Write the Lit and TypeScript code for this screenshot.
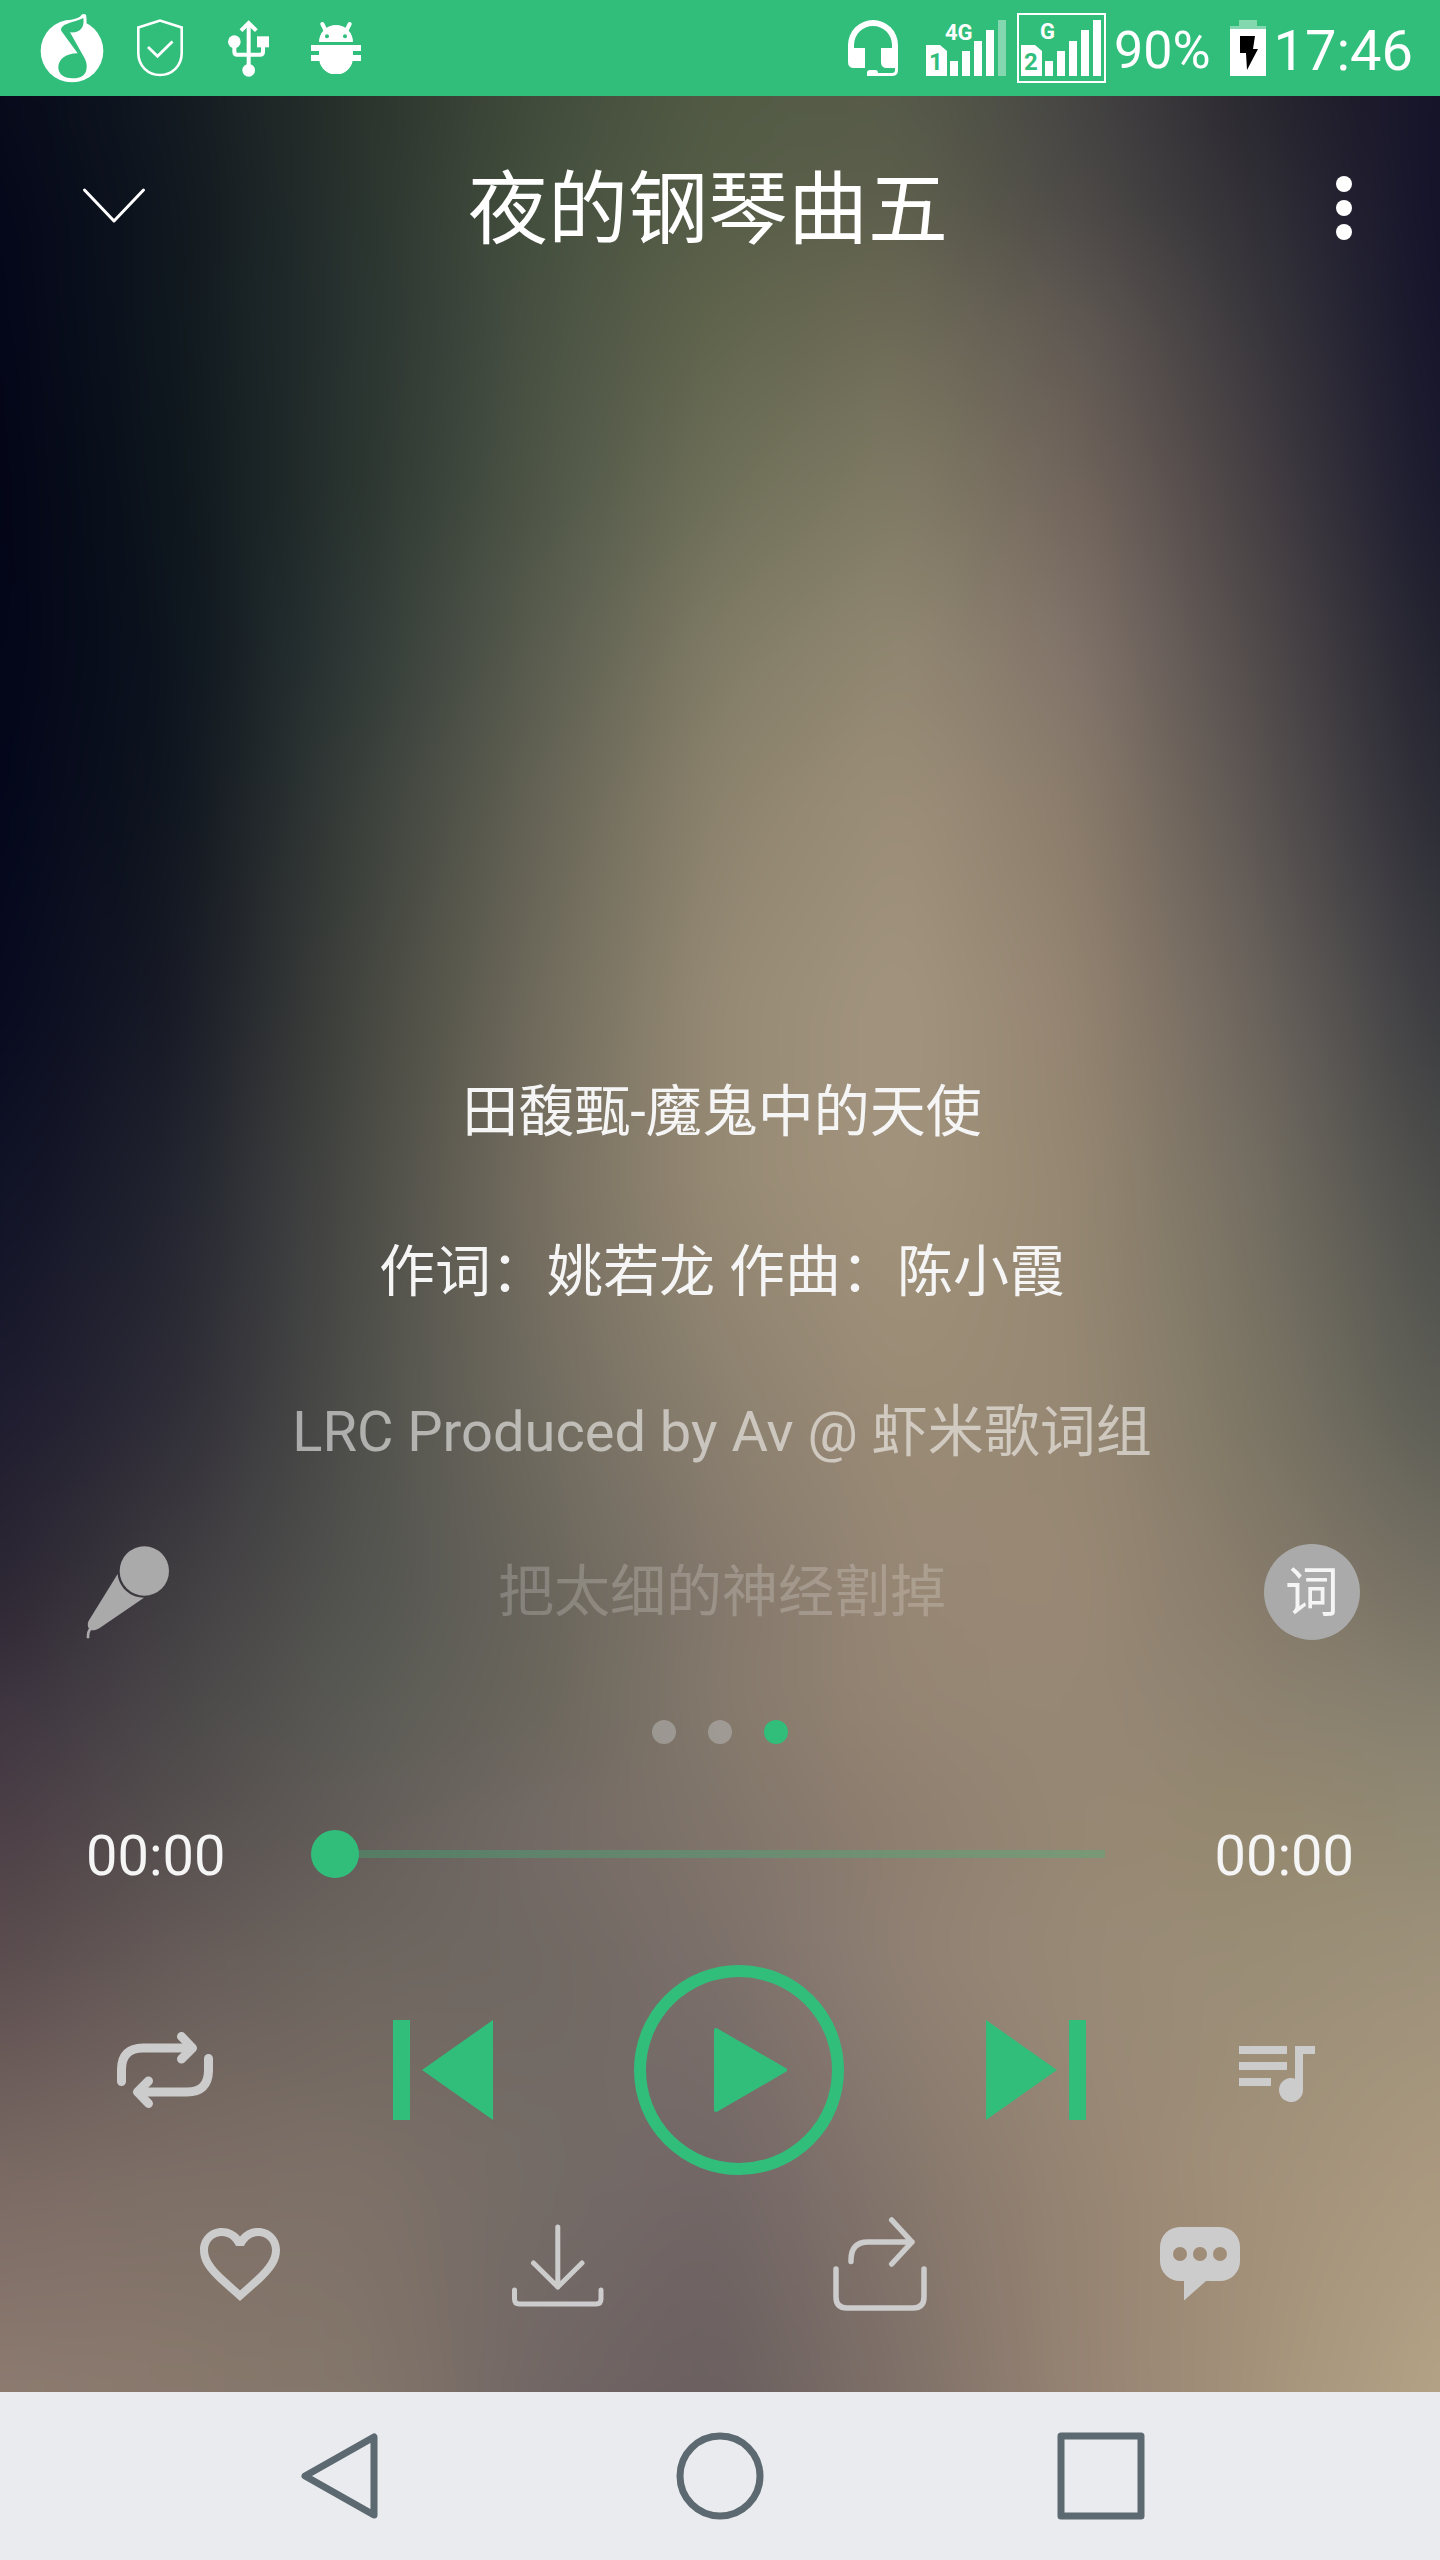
import { LitElement, html, css, svg } from "lit";
import { customElement, property, state } from "lit/decorators.js";

/* Colour field behind the player: each band has a height (percent) and nine evenly spaced colours. */
const BANDS: Array<[number, string]> = [
  [0, "070a1a 131b22 2b332c 424c3c 525b44 575b49 454443 28262e 151329"],
  [5, "04071a 11181f 2a342f 46513f 575e48 5f604d 4e4a48 312f36 14122a"],
  [9, "04061a 10191f 2a3431 485142 60644c 6c6956 5e5752 37353b 14132a"],
  [17, "030517 0e171d 2b3530 4e5647 6f7059 807b65 72655c 453f43 18182d"],
  [24, "030519 0d151e 303a37 5a5d4f 817c66 928872 81736a 504a4a 20202e"],
  [31, "04071c 10161f 3a403b 666456 8e846e 9d8f79 8b7c6b 5a5452 2a2a35"],
  [40, "080b20 181b26 44463f 716c5d 978b75 a39580 948370 6b645d 3a3b40"],
  [48, "101226 232530 4b4c46 776f61 978a74 a2937c 958771 746e62 4b4c4a"],
  [57, "1d1b2f 2f2d37 4f504b 716c60 8c8170 9b8c76 968873 7b7564 5b5c55"],
  [65, "2c2633 423f42 535450 69655c 84786c 978775 998874 877b6b 757063"],
  [70, "3d3440 4b4849 5a5b55 6a665c 857a6d 968573 978876 8d8270 868070"],
  [76, "4e4047 575150 655e5a 756b67 80746a 8e7e70 978874 96896f 938b75"],
  [81, "5a4c4e 675c59 6d665f 706862 7c706b 908174 998a77 9a8e77 9e917b"],
  [91, "7c6b65 7e7067 7e7168 746c67 726666 85766c 978573 a3917a ab9a80"],
  [100, "8d7b70 89796d 83766a 716664 6a5f5f 7e7068 968373 a4927a b5a387"],
];

/* The field is drawn past its visible edges by this much, so that the blur has colour to draw on. */
const BLEED = 96;
const along = (share: number) => `calc(${BLEED}px + (100% - ${2 * BLEED}px) * ${share})`;

@customElement("blurred-backdrop")
class BlurredBackdrop extends LitElement {
  static styles = css`
    :host {
      display: grid;
      overflow: hidden;
    }
    .field {
      display: grid;
      margin: -96px;
      filter: blur(32px);
    }
    .band {
      grid-area: 1 / 1;
    }
  `;

  render() {
    return html`<div class="field">
      ${BANDS.map(([at, colours], i) => {
        const stops = colours
          .split(" ")
          .map((c, n) => `#${c} ${along(n / 8)}`)
          .join(",");
        const mask = i
          ? `mask-image:linear-gradient(transparent ${along(BANDS[i - 1][0] / 100)},#000 ${along(at / 100)})`
          : "";
        return html`<div class="band" style="background-image:linear-gradient(90deg,${stops});${mask}"></div>`;
      })}
    </div>`;
  }
}

const bars = (x: number, last: number) => svg`
  <path d="M${x} 45h14l7 6v25h-21z" />
  <rect x=${x + 24} y="61" width="8" height="15" />
  <rect x=${x + 36} y="51" width="8" height="25" />
  <rect x=${x + 48} y="41" width="8" height="35" />
  <rect x=${x + 60} y="30" width="8" height="46" />
  <rect x=${x + 72} y="20" width="8" height="56" opacity=${last} />`;

@customElement("status-bar")
class StatusBar extends LitElement {
  static styles = css`
    :host {
      display: flex;
      justify-content: space-between;
      align-items: center;
      height: 96px;
      padding: 0 27px 0 28px;
      background: #31be7b;
      color: #fff;
      font-family: Roboto, sans-serif;
    }
    .notices,
    .system {
      display: flex;
      align-items: center;
    }
    .notices span {
      display: flex;
      justify-content: center;
      width: 88px;
    }
    .system {
      gap: 8px;
    }
    svg {
      display: block;
      fill: #fff;
    }
    .line {
      fill: none;
      stroke: #fff;
    }
    .cut {
      fill: #31be7b;
    }
    .tag {
      font: 700 22px Roboto, sans-serif;
    }
    .slot {
      font: 700 24px Roboto, sans-serif;
    }
    .charge,
    .time {
      padding-top: 5px;
      line-height: 64px;
    }
    .charge {
      font-size: 52px;
    }
    .time {
      font-size: 56px;
    }
  `;

  render() {
    return html`
      <div class="notices">
        <span>
          <svg width="64" height="72" viewBox="119 36 192 216" aria-hidden="true">
            <circle cx="215" cy="153" r="94" />
            <path d="M190 70C212 56 236 58 243 45Q249 39 257 44C260 58 259 72 256 88Z" />
            <path class="cut" d="M182 86C190 68 222 68 249 54C253 82 240 99 209 97L249 168C259 184 263 202 255 218C248 231 232 235 215 235C190 235 174 222 174 202C174 180 194 160 232 160L188 100Q181 92 182 86Z" />
          </svg>
        </span>
        <span>
          <svg width="46" height="58" viewBox="0 0 46 58" aria-hidden="true">
            <path class="line" stroke-width="2.6" d="M1.3 8.500L23 1.500L44.700 8.500V34C44.700 47 35 56 23 56S1.300 47 1.300 34Z" />
            <path class="line" stroke-width="2.800" d="M11 28L20.500 37.300L35.500 22.500" />
          </svg>
        </span>
        <span>
          <svg width="41" height="57" viewBox="684 59 123 171" aria-hidden="true">
            <path class="line" stroke-width="12" d="M746 66V205M703 130V154Q703 163 712 163H780Q789 163 789 154V136M723 91L746 68L769 91" />
            <circle cx="703" cy="124" r="19" />
            <rect x="771" y="108" width="36" height="33" />
            <circle cx="746" cy="210" r="19" />
          </svg>
        </span>
        <span>
          <svg width="50" height="52" viewBox="933 66 150 156" aria-hidden="true">
            <path class="line" stroke-width="12" stroke-linecap="round" d="M967 72L976 90M1049 72L1040 90" />
            <path d="M957 126A51 51 0 0 1 1059 126ZM933 135H1083V153H1059V165H1083V183H1058A51 51 0 0 1 958 183H933V165H957V153H933Z" />
            <circle class="cut" cx="981" cy="109" r="6" />
            <circle class="cut" cx="1035" cy="109" r="6" />
          </svg>
        </span>
      </div>
      <div class="system">
        <svg width="70" height="96" viewBox="0 0 70 96" aria-hidden="true">
          <path d="M0 45A25 25 0 0 1 50 45V68H39Q33 68 33 62V48H44V45A19 19 0 0 0 6 45V48H17V68H6Q0 68 0 62Z" />
          <path class="line" stroke-width="3" d="M48.500 62V70Q48.500 74.500 44 74.500H22" />
          <path d="M19 76V73Q19 70 22 70H27Q30 70 30 73V76Z" />
        </svg>
        <svg width="83" height="96" viewBox="0 0 83 96" role="img" aria-label="SIM 1">
          ${bars(0, 0.4)}
          <text class="tag" x="19" y="40">4G</text>
          <text class="slot cut" x="3" y="70">1</text>
        </svg>
        <svg width="89" height="96" viewBox="0 0 89 96" role="img" aria-label="SIM 2">
          <rect class="line" x="1" y="14" width="87" height="68" stroke-width="2" />
          ${bars(4, 1)}
          <text class="tag" x="23" y="39">G</text>
          <text class="slot cut" x="7" y="70">2</text>
        </svg>
        <span class="charge">90%</span>
        <svg width="47" height="96" viewBox="0 0 47 96" aria-hidden="true">
          <path opacity=".4" d="M20 20H38V26H47V29H11V26H20Z" />
          <path d="M11 29H47V76H11Z" />
          <path fill="#000" d="M21 36H36L34 49H39L28 70L27 53H21Z" />
        </svg>
        <span class="time">17:46</span>
      </div>
    `;
  }
}

@customElement("system-nav")
class SystemNav extends LitElement {
  static styles = css`
    :host {
      display: grid;
      grid-template-columns: repeat(3, 1fr);
      height: 168px;
      padding: 0 148px;
      background: #e9ebef;
    }
    button {
      display: grid;
      place-items: center;
      padding: 0;
      border: 0;
      background: none;
    }
    svg {
      fill: none;
      stroke: #5c6970;
      stroke-width: 7;
      stroke-linejoin: round;
    }
  `;

  render() {
    return html`
      <button aria-label="返回">
        <svg width="88" height="88" viewBox="0 0 88 88"><path d="M79 5V83L10 44Z" /></svg>
      </button>
      <button aria-label="主页">
        <svg width="88" height="88" viewBox="0 0 88 88"><circle cx="44" cy="44" r="40" /></svg>
      </button>
      <button aria-label="最近任务">
        <svg width="88" height="88" viewBox="0 0 88 88"><rect x="4" y="4" width="80" height="80" /></svg>
      </button>
    `;
  }
}

@customElement("app-root")
class AppRoot extends LitElement {
  @property() songTitle = "夜的钢琴曲五";
  @state() private page = 2;

  static styles = css`
    :host {
      display: flex;
      flex-direction: column;
      min-height: 100vh;
      font-family: Roboto, "Noto Sans CJK SC", sans-serif;
      color: #f5f5f5;
    }
    .player {
      flex: 1;
      display: grid;
    }
    .backdrop,
    .content {
      grid-area: 1 / 1;
      min-width: 0;
    }
    .content {
      position: relative;
      display: flex;
      flex-direction: column;
    }
    button {
      display: grid;
      place-items: center;
      box-sizing: border-box;
      padding: 0;
      border: 0;
      background: none;
      color: inherit;
      font-family: inherit;
    }
    svg {
      display: block;
    }
    .header {
      display: flex;
      height: 224px;
      padding-left: 60px;
      color: #fff;
    }
    .collapse {
      width: 108px;
      padding-bottom: 4px;
    }
    .more {
      width: 192px;
    }
    .title {
      flex: 1;
      margin: 0;
      padding-top: 4px;
      text-align: center;
      font-size: 80px;
      font-weight: 400;
      line-height: 220px;
    }
    .lyrics {
      flex: 1;
      display: flex;
      flex-direction: column;
      justify-content: flex-end;
    }
    .lyric {
      margin: 0;
      padding-left: 4px;
      text-align: center;
      font-size: 56px;
      line-height: 160px;
    }
    .soft {
      color: rgba(255, 255, 255, 0.55);
    }
    .faint {
      color: rgba(255, 255, 255, 0.2);
    }
    .lyric-row {
      display: grid;
      grid-template-columns: 1fr auto 1fr;
      align-items: center;
      padding: 0 80px;
    }
    .mic {
      justify-self: start;
      padding-left: 6px;
      color: #aaa;
    }
    .words {
      justify-self: end;
      width: 96px;
      height: 96px;
      padding-top: 4px;
      border-radius: 50%;
      background: #aaa;
      font-size: 54px;
      line-height: 92px;
    }
    .dots {
      display: flex;
      justify-content: center;
      align-items: center;
      gap: 32px;
      height: 120px;
    }
    .dot {
      width: 24px;
      height: 24px;
      border-radius: 50%;
      background: rgba(187, 187, 187, 0.5);
    }
    .dot.current {
      background: #31be7b;
    }
    .progress {
      display: flex;
      align-items: center;
      gap: 86px;
      height: 128px;
      margin-bottom: 4px;
      padding: 0 86px;
      font-size: 56px;
    }
    .seek {
      flex: 1;
      min-width: 0;
      height: 48px;
      margin: 0 0 4px;
      appearance: none;
      background: none;
    }
    .seek::-webkit-slider-runnable-track {
      height: 8px;
      background: linear-gradient(rgba(49, 190, 123, 0.3) 0 0) center / calc(100% - 48px) 8px no-repeat;
    }
    .seek::-webkit-slider-thumb {
      appearance: none;
      width: 48px;
      height: 48px;
      margin-top: -20px;
      border-radius: 50%;
      background: #31be7b;
    }
    .transport {
      display: grid;
      grid-template-columns: 278fr 278fr 314fr 280fr 202fr;
      height: 292px;
      padding: 0 62px 0 26px;
      color: #31be7b;
    }
    .actions {
      display: grid;
      grid-template-columns: repeat(4, 1fr);
      height: 96px;
      padding: 0 80px 80px;
    }
    .muted {
      color: #ccc;
    }
    .solid {
      fill: currentColor;
    }
    .stroke {
      fill: none;
      stroke: currentColor;
      stroke-linecap: round;
      stroke-linejoin: round;
    }
  `;

  render() {
    return html`
      <status-bar></status-bar>
      <main class="player" lang="zh-CN">
        <blurred-backdrop class="backdrop"></blurred-backdrop>
        <div class="content">
          <header class="header">
            <button class="collapse" aria-label="收起">
              <svg class="stroke" width="64" height="40" viewBox="0 0 64 40" stroke-width="3"><path d="M2.500 4L32 35L61.500 4" /></svg>
            </button>
            <h1 class="title">${this.songTitle}</h1>
            <button class="more" aria-label="更多">
              <svg class="solid" width="16" height="64" viewBox="0 0 16 64">
                <circle cx="8" cy="8" r="8" /><circle cx="8" cy="32" r="8" /><circle cx="8" cy="56" r="8" />
              </svg>
            </button>
          </header>

          <section class="lyrics" aria-label="歌词">
            <p class="lyric">田馥甄-魔鬼中的天使</p>
            <p class="lyric">作词：姚若龙 作曲：陈小霞</p>
            <p class="lyric soft">LRC Produced by Av @ 虾米歌词组</p>
            <div class="lyric-row">
              <button class="mic" aria-label="演唱">
                <svg class="solid" width="84" height="93" viewBox="77 77 252 279">
                  <circle cx="252" cy="152" r="74" />
                  <path d="M172 161C174 194 204 232 251 232L118 323C106 331 92 332 87 327C80 316 82 305 87 298Z" />
                  <path fill="none" stroke="currentColor" stroke-width="8" d="M90 326C82 334 83 344 83 354" />
                </svg>
              </button>
              <p class="lyric faint">把太细的神经割掉</p>
              <button class="words">词</button>
            </div>
          </section>

          <div class="dots">
            ${[0, 1, 2].map(
              (i) => html`<button
                class=${i === this.page ? "dot current" : "dot"}
                aria-label="第${i + 1}页"
                @click=${() => (this.page = i)}
              ></button>`
            )}
          </div>

          <div class="progress">
            <span>00:00</span>
            <input class="seek" type="range" min="0" max="100" value="0" aria-label="播放进度" />
            <span>00:00</span>
          </div>

          <div class="transport">
            <button class="muted" aria-label="循环播放">
              <svg class="stroke" width="96" height="76" viewBox="0 0 96 76" stroke-width="9">
                <path d="M4.500 49.500V37Q5 16 26 16H72M91.500 26.500V39Q91 60 70 60H24" />
                <path d="M64.500 4.500L75.500 16L64.500 27M31.500 49L20.500 60L31.500 71.500" />
              </svg>
            </button>
            <button aria-label="上一首">
              <svg class="solid" width="100" height="100" viewBox="0 0 100 100"><path d="M0 0H17V100H0ZM100 0V100L29 50Z" /></svg>
            </button>
            <button aria-label="播放">
              <svg width="210" height="210" viewBox="0 0 210 210">
                <circle class="stroke" cx="105" cy="105" r="99" stroke-width="12" />
                <path class="solid" stroke="currentColor" stroke-width="4" stroke-linejoin="round" d="M82 65V145L151 105Z" />
              </svg>
            </button>
            <button aria-label="下一首">
              <svg class="solid" width="100" height="100" viewBox="0 0 100 100"><path d="M83 0H100V100H83ZM0 0V100L71 50Z" /></svg>
            </button>
            <button class="muted" aria-label="播放列表">
              <svg class="solid" width="76" height="48" viewBox="0 0 76 48" overflow="visible">
                <path d="M0 0H48V8H0ZM0 16H48V24H0ZM0 32H32V40H0ZM56 0H76V8H64V44A12 12 0 1 1 56 32.700Z" />
              </svg>
            </button>
          </div>

          <div class="actions muted">
            <button aria-label="喜欢">
              <svg class="solid" width="80" height="73" viewBox="0 0 80 73">
                <path fill-rule="evenodd" d="M40 8.500C35 3 29 0 22 0C9.500 0 0 9.700 0 22C0 34 7 43 18 53.500L40 73L62 53.500C73 43 80 34 80 22C80 9.700 70.500 0 58 0C51 0 45 3 40 8.500ZM36 18H44C47 11.500 52 8 58 8C66 8 72 14 72 22C72 30 67 37.500 56 48L40 62.500L24 48C13 37.500 8 30 8 22C8 14 14 8 22 8C28 8 33 11.500 36 18Z" />
              </svg>
            </button>
            <button aria-label="下载">
              <svg class="stroke" width="96" height="88" viewBox="0 -4 96 88" stroke-width="5">
                <path d="M45.800 3V63M21.500 39L45.800 63L70 39M2.500 66V75Q2.500 80 7.500 80H84Q89 80 89 75V66" />
              </svg>
            </button>
            <button aria-label="分享">
              <svg class="stroke" width="94" height="94" viewBox="0 0 94 94" stroke-width="5.500">
                <path d="M18 44.500V43Q18 25 35 25H79M58.700 3L79 25L58.700 47M3 52V80Q3 91 14 91H80Q91 91 91 80V52" />
              </svg>
            </button>
            <button aria-label="评论">
              <svg class="solid" width="80" height="74" viewBox="0 0 80 74">
                <path fill-rule="evenodd" d="M20 0H60A20 20 0 0 1 80 20V34A20 20 0 0 1 60 54H46L24 73.500V54H20A20 20 0 0 1 0 34V20A20 20 0 0 1 20 0ZM13 27a7 7 0 1 0 14 0a7 7 0 1 0 -14 0M33 27a7 7 0 1 0 14 0a7 7 0 1 0 -14 0M53 27a7 7 0 1 0 14 0a7 7 0 1 0 -14 0" />
              </svg>
            </button>
          </div>
        </div>
      </main>
      <system-nav></system-nav>
    `;
  }
}
